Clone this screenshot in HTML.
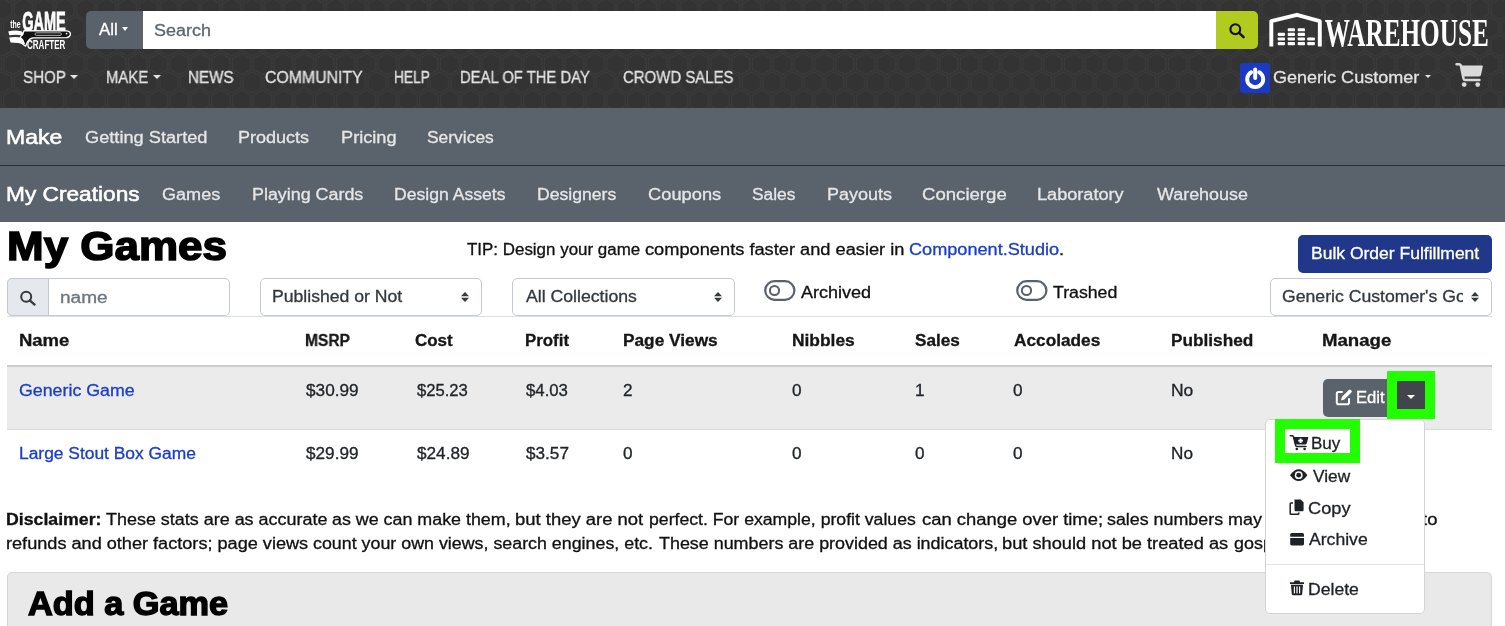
<!DOCTYPE html>
<html><head><meta charset="utf-8">
<style>
*{box-sizing:border-box;margin:0;padding:0}
html,body{width:1505px;height:626px;overflow:hidden;background:#fff;font-family:"Liberation Sans",sans-serif;color:#212529}
.a{position:absolute}
.t{position:absolute;white-space:nowrap;line-height:1;transform-origin:0 0;will-change:transform;-webkit-text-stroke:0.3px currentColor;word-spacing:0px}
svg{position:absolute;overflow:visible;will-change:transform}
</style></head><body>
<!-- header -->
<div class="a" style="left:0;top:0;width:1505px;height:108px;background:#333"></div>
<svg style="left:0;top:0" width="1505" height="108" viewBox="0 0 1505 108">
<defs><pattern id="hex" x="782.6" y="64" width="20.8" height="36.6" patternUnits="userSpaceOnUse">
<g fill="none" stroke="#3c3c3c" stroke-width="1.1">
<path d="M0 -10.6 L9.2 -5.3 L9.2 5.3 L0 10.6 L-9.2 5.3 L-9.2 -5.3Z" transform="translate(0 0)"/><path d="M0 -10.6 L9.2 -5.3 L9.2 5.3 L0 10.6 L-9.2 5.3 L-9.2 -5.3Z" transform="translate(20.8 0)"/>
<path d="M0 -10.6 L9.2 -5.3 L9.2 5.3 L0 10.6 L-9.2 5.3 L-9.2 -5.3Z" transform="translate(10.4 18.3)"/>
<path d="M0 -10.6 L9.2 -5.3 L9.2 5.3 L0 10.6 L-9.2 5.3 L-9.2 -5.3Z" transform="translate(0 36.6)"/><path d="M0 -10.6 L9.2 -5.3 L9.2 5.3 L0 10.6 L-9.2 5.3 L-9.2 -5.3Z" transform="translate(20.8 36.6)"/>
</g></pattern></defs>
<rect width="1505" height="108" fill="url(#hex)"/>
</svg>

<!-- logo -->
<svg style="left:0;top:0" width="80" height="56" viewBox="0 0 80 56">
<text x="10.2" y="28.3" font-family="Liberation Sans" font-weight="bold" font-size="10" fill="#fff" textLength="10.4" lengthAdjust="spacingAndGlyphs">the</text>
<text x="22.2" y="30.6" font-family="Liberation Sans" font-weight="bold" font-size="28.3" fill="#fff" stroke="#fff" stroke-width="0.8" textLength="43.6" lengthAdjust="spacingAndGlyphs">GAME</text>
<path d="M24 30.6 L66.5 30.8 Q70.6 31.3 70.4 34.2 Q70 37.4 66.4 37.6 L33 37.8 Q29 38.6 27.4 42 L25.6 46.2 Q23 44.6 21 42.6 L20 38.4 Q20.6 35.6 22.6 34.6 Z" fill="#111" stroke="#fff" stroke-width="1.3" stroke-linejoin="round"/>
<path d="M8.2 31.6 Q14 29.8 21.6 31.2 L23.6 33.4 L22.8 35.4 Q16 34 9.4 35.2 Z" fill="#fff"/>
<path d="M9.2 37.4 Q15.6 36.4 21.4 37.6 L23.6 40 L25.2 44.4 Q18 42.6 10.6 42.4 Z" fill="#fff"/>
<rect x="35" y="32.8" width="26.4" height="2.6" rx="1.3" fill="none" stroke="#bbb" stroke-width="0.9"/>
<circle cx="66.6" cy="33.6" r="0.9" fill="#fff"/>
<text x="27" y="49.2" font-family="Liberation Sans" font-weight="bold" font-size="13.6" fill="#fff" textLength="38.4" lengthAdjust="spacingAndGlyphs">CRAFTER</text>
</svg>

<!-- search group -->
<div class="a" style="left:86px;top:11px;width:57px;height:38px;background:#59616a;border-radius:5px 0 0 5px"></div>
<div class="a" style="left:122.4px;top:27px;width:0;height:0;border-left:3.8px solid transparent;border-right:3.8px solid transparent;border-top:4.4px solid #fff"></div>
<div class="a" style="left:143px;top:11px;width:1073px;height:38px;background:#fff"></div>
<div class="a" style="left:1216px;top:11px;width:42px;height:38px;background:#b2cb1f;border-radius:0 5px 5px 0"></div>
<svg style="left:1229px;top:23px" width="17" height="15" viewBox="0 0 17 15"><circle cx="6.3" cy="6.2" r="4.9" fill="none" stroke="#111" stroke-width="2.1"/><path d="M9.8 9.7 L14.6 14.2" stroke="#111" stroke-width="2.4" stroke-linecap="round"/></svg>

<!-- warehouse logo -->
<svg style="left:1262px;top:6px" width="240" height="48" viewBox="0 0 240 48">
<path d="M9.3 40.4 L9.3 15.2 L34.9 8.8 L57.8 15.2 L57.8 40.4" fill="none" stroke="#fff" stroke-width="3.9" stroke-linejoin="round" stroke-linecap="butt"/>
<g fill="#fff">
<rect x="15.7" y="26.8" width="7.3" height="3.1" rx="0.9"/><rect x="15.7" y="31.4" width="7.3" height="3.1" rx="0.9"/><rect x="15.7" y="36" width="7.3" height="3.2" rx="0.9"/>
<rect x="25.7" y="22.2" width="7.3" height="3.1" rx="0.9"/><rect x="25.7" y="26.8" width="7.3" height="3.1" rx="0.9"/><rect x="25.7" y="31.4" width="7.3" height="3.1" rx="0.9"/><rect x="25.7" y="36" width="7.3" height="3.2" rx="0.9"/>
<rect x="35.7" y="22.2" width="7.3" height="3.1" rx="0.9"/><rect x="35.7" y="26.8" width="7.3" height="3.1" rx="0.9"/><rect x="35.7" y="31.4" width="7.3" height="3.1" rx="0.9"/><rect x="35.7" y="36" width="7.3" height="3.2" rx="0.9"/>
<rect x="45.2" y="31.4" width="7.7" height="3.1" rx="0.9"/><rect x="45.2" y="36" width="7.7" height="3.2" rx="0.9"/>
</g>
<text x="62.8" y="40" font-family="Liberation Serif" font-weight="bold" font-size="40" fill="#fff" textLength="164" lengthAdjust="spacingAndGlyphs">WAREHOUSE</text>
</svg>

<!-- nav carets -->
<div class="a" style="left:70px;top:75px;width:0;height:0;border-left:4px solid transparent;border-right:4px solid transparent;border-top:4px solid #e3e3e3"></div>
<div class="a" style="left:153px;top:75px;width:0;height:0;border-left:4px solid transparent;border-right:4px solid transparent;border-top:4px solid #e3e3e3"></div>
<div class="a" style="left:1424.8px;top:74.8px;width:0;height:0;border-left:3.6px solid transparent;border-right:3.6px solid transparent;border-top:3.6px solid #e3e3e3"></div>
<!-- power icon -->
<div class="a" style="left:1240px;top:63px;width:30px;height:30px;background:#1a3ac4;border-radius:3px"></div>
<svg style="left:1240px;top:63px" width="30" height="30" viewBox="0 0 30 30"><path d="M11.2 9.2 A8 8 0 1 0 19.2 9.2" fill="none" stroke="#fff" stroke-width="3.9" stroke-linecap="round"/><path d="M15.2 6.5 L15.2 15" stroke="#fff" stroke-width="3.9" stroke-linecap="round"/></svg>
<!-- cart -->
<svg style="left:1455px;top:62px" width="30" height="27" viewBox="0 0 30 27"><path d="M1.6 2.2 L4.2 2.2 Q5.6 2.3 5.9 3.6 L8.6 16.8 Q8.9 18 10.2 18 L24.4 18" fill="none" stroke="#d9d9d9" stroke-width="2.6" stroke-linecap="round" stroke-linejoin="round"/><path d="M6 3.4 L27.2 3.4 Q28 3.6 27.8 4.6 L26 13 Q25.6 14.3 24.2 14.4 L8 14.4 Z" fill="#d9d9d9"/><circle cx="9.2" cy="22.6" r="2.4" fill="#d9d9d9"/><circle cx="22.7" cy="22.6" r="2.4" fill="#d9d9d9"/></svg>

<!-- sub navs -->
<div class="a" style="left:0;top:108px;width:1505px;height:57px;background:#5a626b"></div>
<div class="a" style="left:0;top:166px;width:1505px;height:56px;background:#5a626b"></div>
<div class="a" style="left:0;top:165px;width:1505px;height:1px;background:#2c3035"></div>

<!-- main controls -->
<div class="a" style="left:1298px;top:235px;width:194px;height:38px;background:#20378a;border-radius:5px"></div>
<div class="a" style="left:7px;top:278px;width:223px;height:38px;background:#fff;border:1px solid #c5cad1;border-radius:5px"></div>
<div class="a" style="left:7px;top:278px;width:42px;height:38px;background:#e5e8ec;border:1px solid #c5cad1;border-radius:5px 0 0 5px"></div>
<svg style="left:19px;top:290px" width="18" height="16" viewBox="0 0 18 16"><circle cx="7.2" cy="6.8" r="5" fill="none" stroke="#343a40" stroke-width="2"/><path d="M10.8 10.4 L15.6 14.6" stroke="#343a40" stroke-width="2.3" stroke-linecap="round"/></svg>
<div class="a" style="left:260px;top:278px;width:222px;height:38px;background:#fff;border:1px solid #c5cad1;border-radius:5px"></div>
<div class="a" style="left:512px;top:278px;width:223px;height:38px;background:#fff;border:1px solid #c5cad1;border-radius:5px"></div>
<div class="a" style="left:1270px;top:278px;width:222px;height:38px;background:#fff;border:1px solid #c5cad1;border-radius:5px"></div>

<!-- toggles -->
<svg style="left:764px;top:280px" width="32" height="22" viewBox="0 0 32 22"><rect x="1.2" y="1.2" width="29.2" height="18.6" rx="9.3" fill="#fff" stroke="#59616a" stroke-width="2.2"/><circle cx="10.5" cy="10.5" r="4.6" fill="none" stroke="#59616a" stroke-width="2"/></svg>
<svg style="left:1016px;top:280px" width="32" height="22" viewBox="0 0 32 22"><rect x="1.2" y="1.2" width="29.2" height="18.6" rx="9.3" fill="#fff" stroke="#59616a" stroke-width="2.2"/><circle cx="10.5" cy="10.5" r="4.6" fill="none" stroke="#59616a" stroke-width="2"/></svg>
<!-- select clip cover for Gc -->

<!-- table -->
<div class="a" style="left:7px;top:316px;width:1485px;height:1px;background:#dde1e5"></div>
<div class="a" style="left:7px;top:365px;width:1485px;height:2px;background:#c9cdd1"></div>
<div class="a" style="left:7px;top:367px;width:1485px;height:62px;background:#ebebeb"></div>
<div class="a" style="left:7px;top:429px;width:1485px;height:1px;background:#d5d9dd"></div>

<!-- manage buttons row1 -->
<div class="a" style="left:1323px;top:379px;width:70px;height:38px;background:#5a626b;border-radius:5px 0 0 5px"></div>
<svg style="left:1335px;top:388px" width="18" height="18" viewBox="0 0 18 18"><path d="M7 4 L3.5 4 Q1.8 4 1.8 5.8 L1.8 14.4 Q1.8 16.2 3.6 16.2 L12.2 16.2 Q14 16.2 14 14.4 L14 11" fill="none" stroke="#fff" stroke-width="2" stroke-linecap="round"/><path d="M6 12.4 L6.8 9 L13.8 2 Q14.8 1 15.8 2 L16.4 2.6 Q17.4 3.6 16.4 4.6 L9.4 11.6Z" fill="#fff"/></svg>
<div class="a" style="left:1387px;top:371px;width:48px;height:48px;background:#22ff00"></div>
<div class="a" style="left:1397px;top:381px;width:28px;height:28px;background:#42454d"></div>
<div class="a" style="left:1406.8px;top:394.6px;width:0;height:0;border-left:4.2px solid transparent;border-right:4.2px solid transparent;border-top:4.4px solid #fff"></div>
<!-- row2 buttons (mostly hidden) -->
<div class="a" style="left:1323px;top:443px;width:102px;height:36px;background:#42454d;border-radius:0 2px 2px 0"></div>

<!-- add game card -->
<div class="a" style="left:7px;top:572px;width:1485px;height:80px;background:#e9e9e9;border:1px solid #d6d6d6;border-radius:5px"></div>

<div class="t" style="left:99.20px;top:22.00px;font-size:16.0px;font-weight:normal;color:#fff;transform:scaleX(1.0529);">All</div>
<div class="t" style="left:153.88px;top:23.00px;font-size:16.0px;font-weight:normal;color:#5d6770;transform:scaleX(1.1224);">Search</div>
<div class="t" style="left:23.45px;top:70.00px;font-size:16.0px;font-weight:normal;color:#e3e3e3;transform:scaleX(0.9455);">SHOP</div>
<div class="t" style="left:105.77px;top:70.00px;font-size:16.0px;font-weight:normal;color:#e3e3e3;transform:scaleX(0.9295);">MAKE</div>
<div class="t" style="left:188.05px;top:70.00px;font-size:16.0px;font-weight:normal;color:#e3e3e3;transform:scaleX(0.9500);">NEWS</div>
<div class="t" style="left:264.51px;top:70.00px;font-size:16.0px;font-weight:normal;color:#e3e3e3;transform:scaleX(0.9897);">COMMUNITY</div>
<div class="t" style="left:393.54px;top:70.00px;font-size:16.0px;font-weight:normal;color:#e3e3e3;transform:scaleX(0.8575);">HELP</div>
<div class="t" style="left:460.37px;top:70.00px;font-size:16.0px;font-weight:normal;color:#e3e3e3;transform:scaleX(0.9259);">DEAL OF THE DAY</div>
<div class="t" style="left:622.77px;top:70.00px;font-size:16.0px;font-weight:normal;color:#e3e3e3;transform:scaleX(0.9342);">CROWD SALES</div>
<div class="t" style="left:1273.17px;top:69.60px;font-size:16.0px;font-weight:normal;color:#e3e3e3;transform:scaleX(1.1264);">Generic Customer</div>
<div class="t" style="left:6.33px;top:127.20px;font-size:20.3px;font-weight:normal;color:#fff;transform:scaleX(1.1348);-webkit-text-stroke:0.55px #fff">Make</div>
<div class="t" style="left:84.66px;top:129.50px;font-size:16.0px;font-weight:normal;color:#e6e6e6;transform:scaleX(1.1377);">Getting Started</div>
<div class="t" style="left:238.17px;top:129.50px;font-size:16.0px;font-weight:normal;color:#e6e6e6;transform:scaleX(1.1258);">Products</div>
<div class="t" style="left:340.86px;top:129.50px;font-size:16.0px;font-weight:normal;color:#e6e6e6;transform:scaleX(1.1362);">Pricing</div>
<div class="t" style="left:426.61px;top:129.50px;font-size:16.0px;font-weight:normal;color:#e6e6e6;transform:scaleX(1.0883);">Services</div>
<div class="t" style="left:6.26px;top:183.80px;font-size:20.3px;font-weight:normal;color:#fff;transform:scaleX(1.1181);-webkit-text-stroke:0.55px #fff">My Creations</div>
<div class="t" style="left:162.37px;top:186.50px;font-size:16.0px;font-weight:normal;color:#e6e6e6;transform:scaleX(1.1300);">Games</div>
<div class="t" style="left:252.18px;top:186.50px;font-size:16.0px;font-weight:normal;color:#e6e6e6;transform:scaleX(1.1173);">Playing Cards</div>
<div class="t" style="left:394.30px;top:186.50px;font-size:16.0px;font-weight:normal;color:#e6e6e6;transform:scaleX(1.1000);">Design Assets</div>
<div class="t" style="left:537.30px;top:186.50px;font-size:16.0px;font-weight:normal;color:#e6e6e6;transform:scaleX(1.1000);">Designers</div>
<div class="t" style="left:647.86px;top:186.50px;font-size:16.0px;font-weight:normal;color:#e6e6e6;transform:scaleX(1.1429);">Coupons</div>
<div class="t" style="left:752.02px;top:186.50px;font-size:16.0px;font-weight:normal;color:#e6e6e6;transform:scaleX(1.0821);">Sales</div>
<div class="t" style="left:826.98px;top:186.50px;font-size:16.0px;font-weight:normal;color:#e6e6e6;transform:scaleX(1.1232);">Payouts</div>
<div class="t" style="left:922.34px;top:186.50px;font-size:16.0px;font-weight:normal;color:#e6e6e6;transform:scaleX(1.1620);">Concierge</div>
<div class="t" style="left:1037.37px;top:186.50px;font-size:16.0px;font-weight:normal;color:#e6e6e6;transform:scaleX(1.1329);">Laboratory</div>
<div class="t" style="left:1157.40px;top:186.50px;font-size:16.0px;font-weight:normal;color:#e6e6e6;transform:scaleX(1.1185);">Warehouse</div>
<div class="t" style="left:6.68px;top:225.30px;font-size:41.5px;font-weight:bold;color:#000;transform:scaleX(1.0595);-webkit-text-stroke:1.6px #000">My Games</div>
<div class="t" style="left:467.00px;top:242.30px;font-size:16.0px;font-weight:normal;color:#111;transform:scaleX(1.0583);">TIP: Design your game</div>
<div class="t" style="left:645.16px;top:242.30px;font-size:16.0px;font-weight:normal;color:#111;transform:scaleX(1.1394);">components faster and easier in</div>
<div class="t" style="left:909.47px;top:242.30px;font-size:16.0px;font-weight:normal;color:#111;transform:scaleX(1.1326);"><span style="color:#1a3ec8">Component.Studio</span>.</div>
<div class="t" style="left:1310.61px;top:246.00px;font-size:16.0px;font-weight:normal;color:#fff;transform:scaleX(1.0935);">Bulk Order Fulfillment</div>
<div class="t" style="left:60.31px;top:290.20px;font-size:16.0px;font-weight:normal;color:#6c757d;transform:scaleX(1.1923);">name</div>
<div class="t" style="left:271.80px;top:288.90px;font-size:16.0px;font-weight:normal;color:#33393f;transform:scaleX(1.1009);">Published or Not</div>
<div class="t" style="left:525.50px;top:288.90px;font-size:16.0px;font-weight:normal;color:#33393f;transform:scaleX(1.1040);">All Collections</div>
<div class="t" style="left:800.50px;top:284.80px;font-size:16.0px;font-weight:normal;color:#111;transform:scaleX(1.1262);">Archived</div>
<div class="t" style="left:1052.70px;top:284.80px;font-size:16.0px;font-weight:normal;color:#111;transform:scaleX(1.1070);">Trashed</div>
<div class="t" style="left:1281.90px;top:288.90px;font-size:16.0px;font-weight:normal;color:#33393f;transform:scaleX(1.1024);">Generic Customer's Go</div>
<div class="t" style="left:18.55px;top:333.00px;font-size:16.0px;font-weight:bold;color:#161616;transform:scaleX(1.1548);">Name</div>
<div class="t" style="left:305.23px;top:333.00px;font-size:16.0px;font-weight:bold;color:#161616;transform:scaleX(0.9733);">MSRP</div>
<div class="t" style="left:415.44px;top:333.00px;font-size:16.0px;font-weight:bold;color:#161616;transform:scaleX(1.0600);">Cost</div>
<div class="t" style="left:525.35px;top:333.00px;font-size:16.0px;font-weight:bold;color:#161616;transform:scaleX(1.0537);">Profit</div>
<div class="t" style="left:622.92px;top:333.00px;font-size:16.0px;font-weight:bold;color:#161616;transform:scaleX(1.0791);">Page Views</div>
<div class="t" style="left:792.11px;top:333.00px;font-size:16.0px;font-weight:bold;color:#161616;transform:scaleX(1.0857);">Nibbles</div>
<div class="t" style="left:915.33px;top:333.00px;font-size:16.0px;font-weight:bold;color:#161616;transform:scaleX(1.0725);">Sales</div>
<div class="t" style="left:1013.80px;top:333.00px;font-size:16.0px;font-weight:bold;color:#161616;transform:scaleX(1.0775);">Accolades</div>
<div class="t" style="left:1171.42px;top:333.00px;font-size:16.0px;font-weight:bold;color:#161616;transform:scaleX(1.0760);">Published</div>
<div class="t" style="left:1322.34px;top:333.00px;font-size:16.0px;font-weight:bold;color:#161616;transform:scaleX(1.1638);">Manage</div>
<div class="t" style="left:18.59px;top:383.20px;font-size:16.0px;font-weight:normal;color:#1a3ec8;transform:scaleX(1.1117);">Generic Game</div>
<div class="t" style="left:306.20px;top:383.20px;font-size:16.0px;font-weight:normal;color:#212529;transform:scaleX(1.0750);">$30.99</div>
<div class="t" style="left:416.50px;top:383.20px;font-size:16.0px;font-weight:normal;color:#212529;transform:scaleX(1.0396);">$25.23</div>
<div class="t" style="left:526.40px;top:383.20px;font-size:16.0px;font-weight:normal;color:#212529;transform:scaleX(1.0475);">$4.03</div>
<div class="t" style="left:622.93px;top:383.20px;font-size:16.0px;font-weight:normal;color:#212529;transform:scaleX(1.0726);">2</div>
<div class="t" style="left:792.13px;top:383.20px;font-size:16.0px;font-weight:normal;color:#212529;transform:scaleX(1.0726);">0</div>
<div class="t" style="left:915.33px;top:383.20px;font-size:16.0px;font-weight:normal;color:#212529;transform:scaleX(1.0726);">1</div>
<div class="t" style="left:1012.73px;top:383.20px;font-size:16.0px;font-weight:normal;color:#212529;transform:scaleX(1.0726);">0</div>
<div class="t" style="left:1171.41px;top:383.20px;font-size:16.0px;font-weight:normal;color:#212529;transform:scaleX(1.0895);">No</div>
<div class="t" style="left:18.61px;top:446.30px;font-size:16.0px;font-weight:normal;color:#1a3ec8;transform:scaleX(1.0870);">Large Stout Box Game</div>
<div class="t" style="left:306.20px;top:446.30px;font-size:16.0px;font-weight:normal;color:#212529;transform:scaleX(1.0726);">$29.99</div>
<div class="t" style="left:416.50px;top:446.30px;font-size:16.0px;font-weight:normal;color:#212529;transform:scaleX(1.0726);">$24.89</div>
<div class="t" style="left:526.40px;top:446.30px;font-size:16.0px;font-weight:normal;color:#212529;transform:scaleX(1.0726);">$3.57</div>
<div class="t" style="left:622.93px;top:446.30px;font-size:16.0px;font-weight:normal;color:#212529;transform:scaleX(1.0726);">0</div>
<div class="t" style="left:792.13px;top:446.30px;font-size:16.0px;font-weight:normal;color:#212529;transform:scaleX(1.0726);">0</div>
<div class="t" style="left:915.33px;top:446.30px;font-size:16.0px;font-weight:normal;color:#212529;transform:scaleX(1.0726);">0</div>
<div class="t" style="left:1012.73px;top:446.30px;font-size:16.0px;font-weight:normal;color:#212529;transform:scaleX(1.0726);">0</div>
<div class="t" style="left:1171.43px;top:446.30px;font-size:16.0px;font-weight:normal;color:#212529;transform:scaleX(1.0726);">No</div>
<div class="t" style="left:1355.76px;top:390.30px;font-size:16.0px;font-weight:normal;color:#fff;transform:scaleX(1.0407);">Edit</div>
<div class="t" style="left:6.49px;top:512.30px;font-size:16.0px;font-weight:normal;color:#111;transform:scaleX(1.1060);"><b>Disclaimer:</b></div>
<div class="t" style="left:105.80px;top:512.30px;font-size:16.0px;font-weight:normal;color:#111;transform:scaleX(1.1213);">These stats are as accurate</div>
<div class="t" style="left:332.38px;top:512.30px;font-size:16.0px;font-weight:normal;color:#111;transform:scaleX(1.1158);">as we can make them,</div>
<div class="t" style="left:515.45px;top:512.30px;font-size:16.0px;font-weight:normal;color:#111;transform:scaleX(1.1527);">but they are not</div>
<div class="t" style="left:649.10px;top:512.30px;font-size:16.0px;font-weight:normal;color:#111;transform:scaleX(1.1029);">perfect. For example, profit values</div>
<div class="t" style="left:921.65px;top:512.30px;font-size:16.0px;font-weight:normal;color:#111;transform:scaleX(1.1497);">can change over time;</div>
<div class="t" style="left:1106.68px;top:512.30px;font-size:16.0px;font-weight:normal;color:#111;transform:scaleX(1.1155);">sales numbers</div>
<div class="t" style="left:1228.38px;top:512.30px;font-size:16.0px;font-weight:normal;color:#111;transform:scaleX(1.1213);">may</div>
<div class="t" style="left:1422.00px;top:512.30px;font-size:16.0px;font-weight:normal;color:#111;transform:scaleX(1.1538);">to</div>
<div class="t" style="left:6.47px;top:535.70px;font-size:16.0px;font-weight:normal;color:#111;transform:scaleX(1.1325);">refunds and other factors; page views</div>
<div class="t" style="left:313.39px;top:535.70px;font-size:16.0px;font-weight:normal;color:#111;transform:scaleX(1.1145);">count your own views, search engines, etc.</div>
<div class="t" style="left:659.00px;top:535.70px;font-size:16.0px;font-weight:normal;color:#111;transform:scaleX(1.1185);">These numbers are provided as indicators,</div>
<div class="t" style="left:1002.46px;top:535.70px;font-size:16.0px;font-weight:normal;color:#111;transform:scaleX(1.1401);">but should not be treated as</div>
<div class="t" style="left:1233.88px;top:535.70px;font-size:16.0px;font-weight:normal;color:#111;transform:scaleX(1.1213);">gospel.</div>
<div class="t" style="left:28.30px;top:587.90px;font-size:32.4px;font-weight:bold;color:#000;transform:scaleX(1.0593);-webkit-text-stroke:1.4px #000">Add a Game</div>
<!-- gc cover -->
<div class="a" style="left:1463px;top:284px;width:8px;height:26px;background:#fff"></div>
<svg style="left:0;top:0" width="1505" height="320" viewBox="0 0 1505 320"><g fill="#343a40">
<path d="M461 296.3 L465 292 L469 296.3Z M461 297.8 L469 297.8 L465 302Z"/>
<path d="M714 296.3 L718 292 L722 296.3Z M714 297.8 L722 297.8 L718 302Z"/>
<path d="M1471 296.3 L1475 292 L1479 296.3Z M1471 297.8 L1479 297.8 L1475 302Z"/>
</g></svg>
<!-- dropdown -->
<div class="a" style="left:1265px;top:419px;width:160px;height:195px;background:#fff;border:1px solid #d4d4d4;border-radius:5px"></div>
<div class="a" style="left:1275px;top:419px;width:85px;height:44px;background:#22ff00"></div>
<div class="a" style="left:1284.7px;top:429px;width:65.3px;height:24px;background:#fff"></div>
<div class="a" style="left:1266px;top:564px;width:158px;height:1px;background:#e3e3e3"></div>
<svg style="left:0;top:0" width="1505" height="626" viewBox="0 0 1505 626"><g fill="#1e2125">
<!-- cart plus -->
<path d="M1290.3 435.8 L1292.4 435.8 Q1293.2 435.9 1293.5 436.8 L1295.7 445.6 Q1296 446.6 1297 446.6 L1306 446.6" fill="none" stroke="#1e2125" stroke-width="1.5" stroke-linecap="round"/>
<path d="M1293.2 437 L1307.9 437 Q1308.4 437.2 1308.2 438 L1306.7 443.6 Q1306.4 444.4 1305.6 444.4 L1295 444.4Z"/>
<circle cx="1296.8" cy="449" r="1.3"/><circle cx="1304.6" cy="449" r="1.3"/>
<path d="M1299.6 438.4 L1301.6 438.4 L1301.6 439.8 L1303 439.8 L1303 441.6 L1301.6 441.6 L1301.6 443 L1299.6 443 L1299.6 441.6 L1298.2 441.6 L1298.2 439.8 L1299.6 439.8Z" fill="#fff"/>
<!-- eye -->
<path d="M1290 475.2 Q1298.7 463.5 1307.4 475.2 Q1298.7 486.9 1290 475.2Z"/>
<circle cx="1298.7" cy="475.2" r="3.9" fill="#fff"/><circle cx="1298.7" cy="475.2" r="2.4"/>
<!-- copy -->
<path d="M1294.5 499.6 L1300.6 499.6 L1303.6 502.6 L1303.6 510 Q1303.6 511.2 1302.4 511.2 L1295.7 511.2 Q1294.5 511.2 1294.5 510Z"/>
<path d="M1293 503 L1291 503 Q1290.2 503 1290.2 503.8 L1290.2 513.4 Q1290.2 514.2 1291 514.2 L1298 514.2 Q1298.8 514.2 1298.8 513.4 L1298.8 512.4" fill="none" stroke="#1e2125" stroke-width="1.5"/>
<!-- archive box -->
<path d="M1290.2 536.8 L1290.2 534.6 Q1290.2 533 1291.8 533 L1302.4 533 Q1304 533 1304 534.6 L1304 536.8Z"/>
<path d="M1290.2 538 L1304 538 L1304 544 Q1304 545.4 1302.6 545.4 L1291.6 545.4 Q1290.2 545.4 1290.2 544Z"/>
<!-- trash -->
<path d="M1290 582.2 L1304 582.2 L1304 584 L1290 584Z M1294.6 580.4 L1299.4 580.4 L1300 582.2 L1294 582.2Z"/>
<path d="M1291 584.8 L1303 584.8 L1302.2 594 Q1302 595.2 1300.8 595.2 L1293.2 595.2 Q1292 595.2 1291.8 594Z"/>
<rect x="1293.8" y="586.4" width="1.2" height="7" fill="#fff"/><rect x="1296.4" y="586.4" width="1.2" height="7" fill="#fff"/><rect x="1299" y="586.4" width="1.2" height="7" fill="#fff"/>
</g></svg>

<div class="t" style="left:1311.44px;top:435.60px;font-size:16.0px;font-weight:normal;color:#1e2125;transform:scaleX(1.0630);">Buy</div>
<div class="t" style="left:1313.30px;top:468.50px;font-size:16.0px;font-weight:normal;color:#1e2125;transform:scaleX(1.0794);">View</div>
<div class="t" style="left:1307.86px;top:501.20px;font-size:16.0px;font-weight:normal;color:#1e2125;transform:scaleX(1.1389);">Copy</div>
<div class="t" style="left:1309.00px;top:532.40px;font-size:16.0px;font-weight:normal;color:#1e2125;transform:scaleX(1.1000);">Archive</div>
<div class="t" style="left:1307.90px;top:581.50px;font-size:16.0px;font-weight:normal;color:#1e2125;transform:scaleX(1.1000);">Delete</div>
</body></html>
